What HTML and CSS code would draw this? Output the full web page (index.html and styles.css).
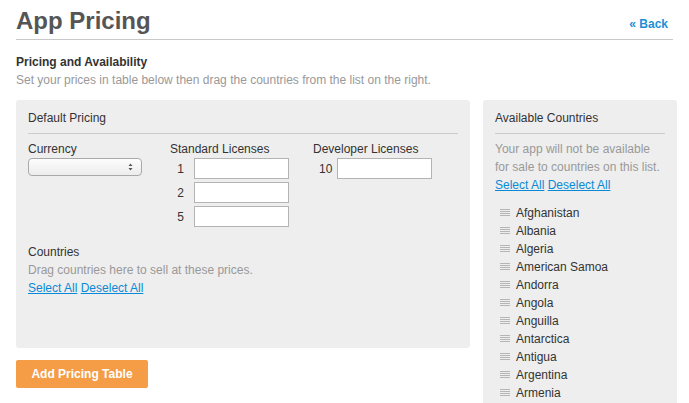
FILE: index.html
```html
<!DOCTYPE html>
<html>
<head>
<meta charset="utf-8">
<link rel="stylesheet" href="styles.css">
</head>
<body>
<div class="page">
  <header class="top">
    <h1 class="title">App Pricing</h1>
    <a class="back" href="#">« Back</a>
  </header>
  <h2 class="section">Pricing and Availability</h2>
  <p class="intro">Set your prices in table below then drag the countries from the list on the right.</p>
  <div class="cols">
    <div class="left">
      <div class="panel pricing">
        <div class="panel-title">Default Pricing</div>
        <div class="grid">
          <div class="col">
            <div class="label">Currency</div>
            <div class="select"><span class="arrows">
              <svg width="5" height="8" viewBox="0 0 5 8"><path d="M2.5 0.5 L4.5 3 L0.5 3 Z M2.5 7.5 L4.5 5 L0.5 5 Z" fill="#555"/></svg>
            </span></div>
          </div>
          <div class="col">
            <div class="label">Standard Licenses</div>
            <div class="row"><span class="num">1</span><span class="input"></span></div>
            <div class="row"><span class="num">2</span><span class="input"></span></div>
            <div class="row"><span class="num">5</span><span class="input"></span></div>
          </div>
          <div class="col">
            <div class="label">Developer Licenses</div>
            <div class="row dev"><span class="num">10</span><span class="input"></span></div>
          </div>
        </div>
        <div class="countries">
          <div class="label">Countries</div>
          <div class="muted">Drag countries here to sell at these prices.</div>
          <div class="links"><a href="#">Select All</a> <a href="#">Deselect All</a></div>
        </div>
      </div>
      <button class="add">Add Pricing Table</button>
    </div>
    <div class="panel avail">
      <div class="panel-title">Available Countries</div>
      <div class="muted note">Your app will not be available for sale to countries on this list.</div>
      <div class="links"><a href="#">Select All</a> <a href="#">Deselect All</a></div>
      <ul class="list">
        <li><svg class="grip" width="10" height="8" viewBox="0 0 10 8"><path d="M0 0.5H10M0 2.5H10M0 4.5H10M0 6.5H10" stroke="#b5b5b5" stroke-width="1"/></svg>Afghanistan</li>
        <li><svg class="grip" width="10" height="8" viewBox="0 0 10 8"><path d="M0 0.5H10M0 2.5H10M0 4.5H10M0 6.5H10" stroke="#b5b5b5" stroke-width="1"/></svg>Albania</li>
        <li><svg class="grip" width="10" height="8" viewBox="0 0 10 8"><path d="M0 0.5H10M0 2.5H10M0 4.5H10M0 6.5H10" stroke="#b5b5b5" stroke-width="1"/></svg>Algeria</li>
        <li><svg class="grip" width="10" height="8" viewBox="0 0 10 8"><path d="M0 0.5H10M0 2.5H10M0 4.5H10M0 6.5H10" stroke="#b5b5b5" stroke-width="1"/></svg>American Samoa</li>
        <li><svg class="grip" width="10" height="8" viewBox="0 0 10 8"><path d="M0 0.5H10M0 2.5H10M0 4.5H10M0 6.5H10" stroke="#b5b5b5" stroke-width="1"/></svg>Andorra</li>
        <li><svg class="grip" width="10" height="8" viewBox="0 0 10 8"><path d="M0 0.5H10M0 2.5H10M0 4.5H10M0 6.5H10" stroke="#b5b5b5" stroke-width="1"/></svg>Angola</li>
        <li><svg class="grip" width="10" height="8" viewBox="0 0 10 8"><path d="M0 0.5H10M0 2.5H10M0 4.5H10M0 6.5H10" stroke="#b5b5b5" stroke-width="1"/></svg>Anguilla</li>
        <li><svg class="grip" width="10" height="8" viewBox="0 0 10 8"><path d="M0 0.5H10M0 2.5H10M0 4.5H10M0 6.5H10" stroke="#b5b5b5" stroke-width="1"/></svg>Antarctica</li>
        <li><svg class="grip" width="10" height="8" viewBox="0 0 10 8"><path d="M0 0.5H10M0 2.5H10M0 4.5H10M0 6.5H10" stroke="#b5b5b5" stroke-width="1"/></svg>Antigua</li>
        <li><svg class="grip" width="10" height="8" viewBox="0 0 10 8"><path d="M0 0.5H10M0 2.5H10M0 4.5H10M0 6.5H10" stroke="#b5b5b5" stroke-width="1"/></svg>Argentina</li>
        <li><svg class="grip" width="10" height="8" viewBox="0 0 10 8"><path d="M0 0.5H10M0 2.5H10M0 4.5H10M0 6.5H10" stroke="#b5b5b5" stroke-width="1"/></svg>Armenia</li>
      </ul>
    </div>
  </div>
</div>
</body>
</html>
```

FILE: styles.css
```css
html, body {
  margin: 0;
  padding: 0;
  background: #fff;
  overflow: hidden;
}
body {
  font-family: "Liberation Sans", Arial, Helvetica, sans-serif;
  font-size: 12px;
  color: #333;
  height: 403px;
}
.page {
  width: 657px;
  margin-left: 16px;
}
.top {
  display: flex;
  justify-content: space-between;
  align-items: flex-end;
  border-bottom: 1px solid #c8c8c8;
  height: 39px;
}
.title {
  margin: 0;
  font-size: 24px;
  line-height: 28px;
  font-weight: bold;
  color: #555;
  padding-bottom: 4px;
}
.back {
  color: #1a8fd8;
  font-weight: bold;
  font-size: 12px;
  line-height: 14px;
  text-decoration: none;
  margin-right: 5px;
  padding-bottom: 8px;
}
.section {
  margin: 14px 0 0;
  font-size: 12px;
  line-height: 16px;
  font-weight: bold;
  color: #333;
}
.intro {
  margin: 1px 0 0;
  line-height: 18px;
  color: #999;
}
.cols {
  display: flex;
  gap: 13px;
  margin-top: 11px;
  align-items: flex-start;
}
.left {
  width: 454px;
  flex: none;
}
.panel {
  background: #eee;
  border-radius: 3px;
  padding: 9px 12px 0;
}
.pricing {
  height: 239px;
}
.panel-title {
  line-height: 18px;
  padding-bottom: 6px;
  border-bottom: 1px solid #ccc;
}
.grid {
  display: grid;
  grid-template-columns: 142px 143px auto;
  margin-top: 6px;
}
.label {
  line-height: 18px;
}
.select {
  width: 112px;
  height: 16px;
  border: 1px solid #a9a9a9;
  border-radius: 4px;
  background: linear-gradient(#fdfdfd, #ececec);
  display: flex;
  justify-content: flex-end;
  align-items: center;
}
.arrows {
  display: flex;
  margin-right: 8px;
}
.row {
  display: flex;
  align-items: center;
  height: 21px;
  margin-bottom: 3px;
}
.num {
  width: 14px;
  text-align: right;
  margin-right: 10px;
}
.dev .num {
  width: auto;
  margin-left: 6px;
  margin-right: 5px;
}
.input {
  width: 93px;
  height: 19px;
  background: #fff;
  border: 1px solid #b4b4b4;
}
.countries {
  margin-top: 13px;
}
.muted {
  color: #999;
  line-height: 18px;
}
.links {
  line-height: 18px;
}
.links a {
  color: #0a8ad6;
  text-decoration: underline;
}
.add {
  display: block;
  margin-top: 12px;
  width: 132px;
  height: 28px;
  border: none;
  border-radius: 2px;
  background: #f49c46;
  color: #fff;
  font-family: "Liberation Sans", Arial, sans-serif;
  font-weight: bold;
  font-size: 12px;
  padding: 0;
}
.avail {
  flex: none;
  width: 170px;
  height: 300px;
}
.note {
  margin-top: 6px;
}
.list {
  list-style: none;
  margin: 10px 0 0;
  padding: 0 0 0 5px;
}
.list li {
  display: flex;
  align-items: center;
  line-height: 18px;
}
.grip {
  margin-right: 6px;
  flex: none;
}
```
